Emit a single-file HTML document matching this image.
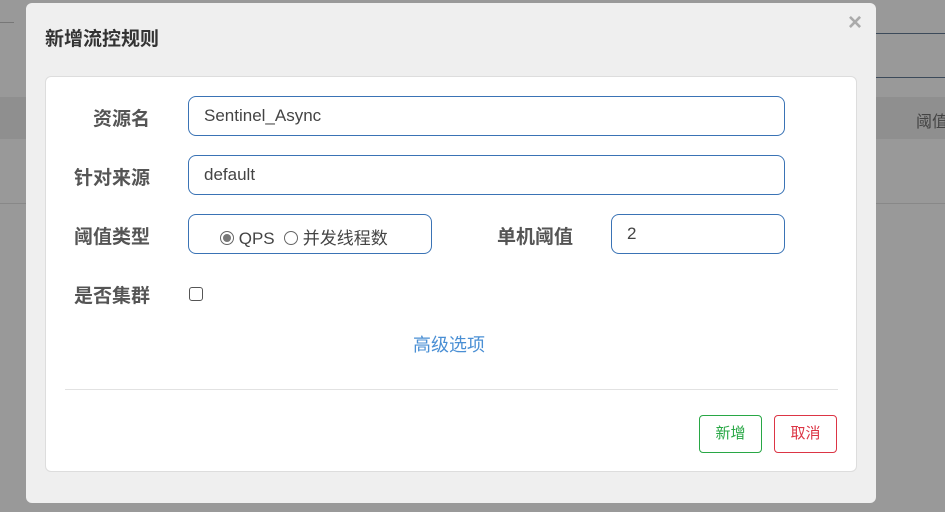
<!DOCTYPE html>
<html><head><meta charset="utf-8"><style>
*{box-sizing:border-box;margin:0;padding:0}
body{width:945px;height:512px;background:#999;position:relative;overflow:hidden;font-family:"Liberation Sans","Noto Sans CJK SC",sans-serif}
.abs{position:absolute;white-space:nowrap}
.modal{left:26px;top:3px;width:850px;height:500px;background:#efefef;border-radius:6px}
.title{left:19px;top:21px;font-size:19px;font-weight:bold;color:#333}
.close{right:14px;top:6px;font-size:24px;color:#aaa;font-weight:bold}
.panel{left:19px;top:73px;width:812px;height:396px;background:#fff;border:1px solid #ddd;border-radius:6px}
.lbl{font-size:19px;font-weight:bold;color:#555;text-align:right;width:86px}
.inp{border:1px solid #3a73b5;border-radius:8px;height:40px;font-size:17px;color:#444;padding:9px 15px;background:#fff}
.btn{height:38px;width:63px;border-radius:4px;font-size:15px;text-align:center;line-height:36px;background:#fff}
.radio{display:inline-block;width:14px;height:14px;border:1px solid #666;border-radius:50%;vertical-align:-1px;position:relative}
</style></head><body>
<div class="abs" style="left:0;top:22px;width:14px;height:1px;background:#777"></div>
<div class="abs" style="left:876px;top:33px;width:69px;height:1px;background:#3c4a5a"></div>
<div class="abs" style="left:876px;top:77px;width:69px;height:1px;background:#3c4a5a"></div>
<div class="abs" style="left:0;top:97px;width:945px;height:42px;background:#8f8f8f"></div>
<div class="abs" style="left:0;top:203px;width:945px;height:1px;background:#888"></div>
<div class="abs" style="left:916px;top:108px;font-size:16px;color:#444">阈值</div>
<div class="abs modal">
 <div class="abs title">新增流控规则</div>
 <div class="abs close">×</div>
 <div class="abs panel">
  <div class="abs lbl" style="left:18px;top:27px">资源名</div>
  <div class="abs inp" style="left:142px;top:19px;width:597px">Sentinel_Async</div>
  <div class="abs lbl" style="left:18px;top:86px">针对来源</div>
  <div class="abs inp" style="left:142px;top:78px;width:597px">default</div>
  <div class="abs lbl" style="left:18px;top:145px">阈值类型</div>
  <div class="abs inp" style="left:142px;top:137px;width:244px;padding:9px 0 0 31px;font-size:17px"><span class="radio"><span class="abs" style="left:2px;top:2px;width:8px;height:8px;border-radius:50%;background:#777"></span></span> QPS&nbsp; <span class="radio"></span> 并发线程数</div>
  <div class="abs lbl" style="left:441px;top:145px">单机阈值</div>
  <div class="abs inp" style="left:565px;top:137px;width:174px">2</div>
  <div class="abs lbl" style="left:18px;top:204px">是否集群</div>
  <div class="abs" style="left:143px;top:210px;width:14px;height:14px;border:1px solid #555;border-radius:3px"></div>
  <div class="abs" style="left:367px;top:254px;font-size:18px;color:#4a8fd4">高级选项</div>
  <div class="abs" style="left:19px;top:312px;width:773px;height:1px;background:#e2e2e2"></div>
  <div class="abs btn" style="left:653px;top:338px;border:1px solid #28a745;color:#28a745">新增</div>
  <div class="abs btn" style="left:728px;top:338px;border:1px solid #dc3545;color:#dc3545">取消</div>
 </div>
</div>
</body></html>
